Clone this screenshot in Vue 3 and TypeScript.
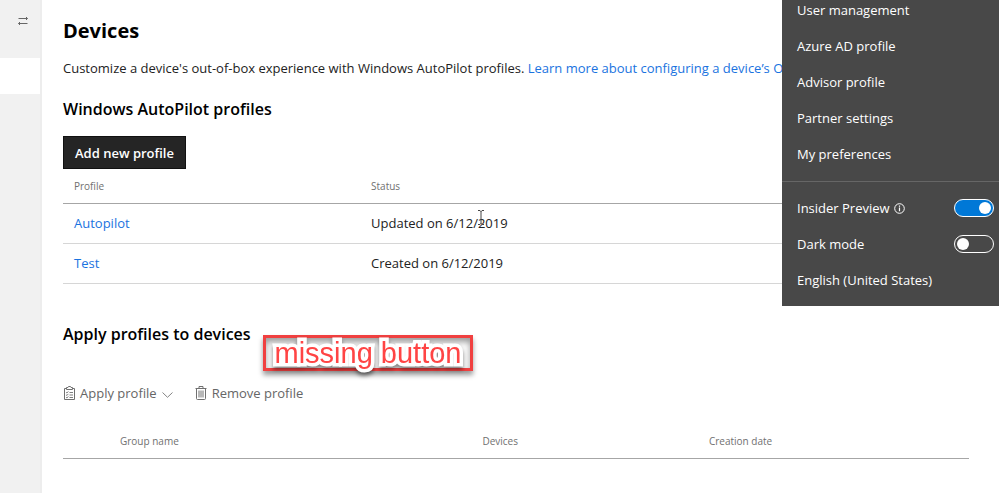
<script setup lang="ts">
import { ref } from 'vue'

interface Profile {
  name: string
  status: string
}

const profiles: Profile[] = [
  { name: 'Autopilot', status: 'Updated on 6/12/2019' },
  { name: 'Test', status: 'Created on 6/12/2019' },
]

const menuLinks: string[] = [
  'User management',
  'Azure AD profile',
  'Advisor profile',
  'Partner settings',
  'My preferences',
]

const insiderPreview = ref(true)
const darkMode = ref(false)
</script>

<template>
  <div class="shell">
    <nav class="rail" aria-label="Sections">
      <button class="rail-toggle" type="button" aria-label="Switch">
        <svg width="10" height="8" viewBox="0 0 10 8" fill="none" stroke="#666" stroke-width="1">
          <path d="M0.5 1.5H9.5M8 0L9.5 1.5L8 3M9.5 6.5H0.5M2 5L0.5 6.5L2 8" />
        </svg>
      </button>
      <a class="rail-current" href="#devices" aria-label="Devices"></a>
    </nav>

    <main class="main">
      <h1>Devices</h1>
      <p class="intro">
        Customize a device's out-of-box experience with Windows AutoPilot profiles.
        <a href="#learn">Learn more about configuring a device’s Ou</a>
      </p>

      <h2>Windows AutoPilot profiles</h2>
      <button class="primary" type="button">Add new profile</button>
      <table class="profiles">
        <thead>
          <tr>
            <th class="col-profile">Profile</th>
            <th>Status</th>
          </tr>
        </thead>
        <tbody>
          <tr v-for="p in profiles" :key="p.name">
            <td><a href="#profile">{{ p.name }}</a></td>
            <td>{{ p.status }}</td>
          </tr>
        </tbody>
      </table>

      <h2 class="apply-title">Apply profiles to devices</h2>
      <div class="toolbar">
        <button class="command" type="button">
          <svg width="12" height="14" viewBox="0 0 12 14" fill="none" stroke="#707070" stroke-width="1">
            <path d="M3.5 2.5H1.5V13.5H11.5V2.5H9.5M3.5 3.5V1.5H5L5.5 0.5H7.5L8 1.5H9.5V3.5Z" />
            <path d="M3 6.2L3.9 7L5.3 5.4M3 8.7L3.9 9.5L5.3 7.9M3 11.2L3.9 12L5.3 10.4M6.5 6.5H10M6.5 9H10M6.5 11.5H10" stroke-width="0.9" />
          </svg>
          <span>Apply profile</span>
          <svg class="chevron" width="11" height="6" viewBox="0 0 11 6" fill="none" stroke="#858585">
            <path d="M0.5 0.5L5.5 5.3L10.5 0.5" />
          </svg>
        </button>
        <button class="command" type="button">
          <svg width="12" height="14" viewBox="0 0 12 14" fill="none" stroke="#707070" stroke-width="1">
            <path d="M0.5 2.5H11.5M4 2.5V0.5H8V2.5M1.5 2.5V12.5Q1.5 13.5 2.5 13.5H9.5Q10.5 13.5 10.5 12.5V2.5M4 4.5V11.5M6 4.5V11.5M8 4.5V11.5" />
          </svg>
          <span>Remove profile</span>
        </button>
      </div>
      <table class="groups">
        <thead>
          <tr>
            <th class="col-select"></th>
            <th class="col-group">Group name</th>
            <th class="col-devices">Devices</th>
            <th>Creation date</th>
          </tr>
        </thead>
      </table>
    </main>

    <aside class="menu">
      <ul class="links">
        <li v-for="l in menuLinks" :key="l"><a href="#menu">{{ l }}</a></li>
      </ul>
      <div class="settings">
        <label class="setting">
          <span>Insider Preview</span>
          <svg width="11" height="11" viewBox="0 0 11 11" fill="none" stroke="#fff" stroke-width="1">
            <circle cx="5.5" cy="5.5" r="4.8" />
            <path d="M5.5 4.6V8.2M5.5 2.6V3.7" stroke-width="1.2" />
          </svg>
          <input v-model="insiderPreview" class="switch" type="checkbox" role="switch" />
        </label>
        <label class="setting">
          <span>Dark mode</span>
          <input v-model="darkMode" class="switch" type="checkbox" role="switch" />
        </label>
        <a class="setting" href="#language">English (United States)</a>
      </div>
    </aside>

    <div class="callout"><span>missing button</span></div>
    <svg class="pointer" width="8" height="15" viewBox="0 0 8 15" fill="none" stroke="#444">
      <path d="M1 0.5H3L4 1.5L5 0.5H7M4 1V14M1 14.5H3L4 13.5L5 14.5H7" />
    </svg>
  </div>
</template>

<style>
body {
  margin: 0;
  background: #fff;
}
</style>

<style scoped>
.shell {
  position: relative;
  display: flex;
  min-height: 100vh;
  overflow: hidden;
  font-family: "Open Sans", "Noto Sans", sans-serif;
  font-size: 13px;
  line-height: 20px;
  color: #222;
}
a {
  color: #1a73e0;
  text-decoration: none;
}
button {
  font: inherit;
  border: 0;
  background: none;
  padding: 0;
}
.rail {
  flex: none;
  width: 40px;
  background: #f1f1f1;
  border-right: 2px solid #ededed;
}
.rail-toggle {
  display: flex;
  align-items: center;
  justify-content: flex-end;
  width: 28px;
  height: 42px;
}
.rail-current {
  display: block;
  height: 36px;
  margin-top: 16px;
  background: #fff;
}
.main {
  flex: 1;
  min-width: 0;
  padding: 17px 30px 0 21px;
}
h1 {
  margin: 0;
  font-size: 20px;
  line-height: 28px;
  color: #000;
}
.intro {
  margin: 13px 0 20px;
  white-space: nowrap;
}
h2 {
  margin: 0;
  font-size: 16px;
  font-weight: 600;
  line-height: 22px;
  color: #000;
}
.primary {
  display: block;
  height: 33px;
  margin-top: 16px;
  padding: 0 11px;
  border: 1px solid #111;
  background: #252525;
  color: #fff;
  font-weight: 600;
}
table {
  width: 100%;
  table-layout: fixed;
  border-collapse: collapse;
}
th,
td {
  box-sizing: border-box;
  padding: 0;
  text-align: left;
  white-space: nowrap;
}
th {
  height: 34px;
  font-size: 10px;
  font-weight: 400;
  color: #707070;
  border-bottom: 1px solid #a6a6a6;
}
td {
  height: 40px;
  border-bottom: 1px solid #d6d6d6;
}
.profiles th:first-child,
.profiles td:first-child {
  padding-left: 11px;
}
.col-profile {
  width: 34%;
}
.apply-title {
  margin-top: 39px;
}
.toolbar {
  display: flex;
  gap: 22px;
  margin-top: 38px;
}
.command {
  display: flex;
  align-items: center;
  gap: 5px;
  color: #666;
}
.chevron {
  margin-top: 4px;
}
.groups {
  margin-top: 22px;
}
.col-select {
  width: 57px;
}
.col-group {
  width: 40%;
}
.col-devices {
  width: 25%;
}
.menu {
  position: absolute;
  top: 0;
  right: 0;
  width: 217px;
  padding-bottom: 8px;
  background: #484848;
  color: #fff;
}
.menu a {
  color: #fff;
}
.links {
  margin: 0;
  padding: 0 15px 1px;
  list-style: none;
  border-bottom: 1px solid #666;
}
.links li {
  height: 28px;
  padding-bottom: 8px;
}
.links a {
  display: block;
}
.settings {
  padding: 8px 5px 0 15px;
}
.setting {
  display: flex;
  align-items: center;
  gap: 4px;
  height: 36px;
}
.switch {
  appearance: none;
  box-sizing: border-box;
  width: 40px;
  height: 18px;
  margin: 0 0 0 auto;
  padding: 2px;
  border: 1px solid #fff;
  border-radius: 9px;
  background: transparent;
  display: flex;
}
.switch::before {
  content: "";
  width: 12px;
  height: 12px;
  border-radius: 50%;
  background: #fff;
}
.switch:checked {
  justify-content: flex-end;
  background: #0078d7;
}
.callout {
  position: absolute;
  left: 263px;
  top: 335px;
  box-sizing: border-box;
  width: 210px;
  height: 36px;
  border: 3px solid #f04040;
  box-shadow: 0 4px 5px rgba(0, 0, 0, 0.4), inset 0 4px 6px rgba(0, 0, 0, 0.4);
  text-align: center;
}
.callout span {
  font-family: "Liberation Sans", sans-serif;
  font-size: 29px;
  line-height: 30px;
  color: #f44;
  white-space: nowrap;
  -webkit-text-stroke: 7px #fff;
  paint-order: stroke fill;
  stroke-linejoin: round;
  filter: drop-shadow(0 3px 2px rgba(0, 0, 0, 0.5));
}
.pointer {
  position: absolute;
  left: 477px;
  top: 210px;
}
</style>
